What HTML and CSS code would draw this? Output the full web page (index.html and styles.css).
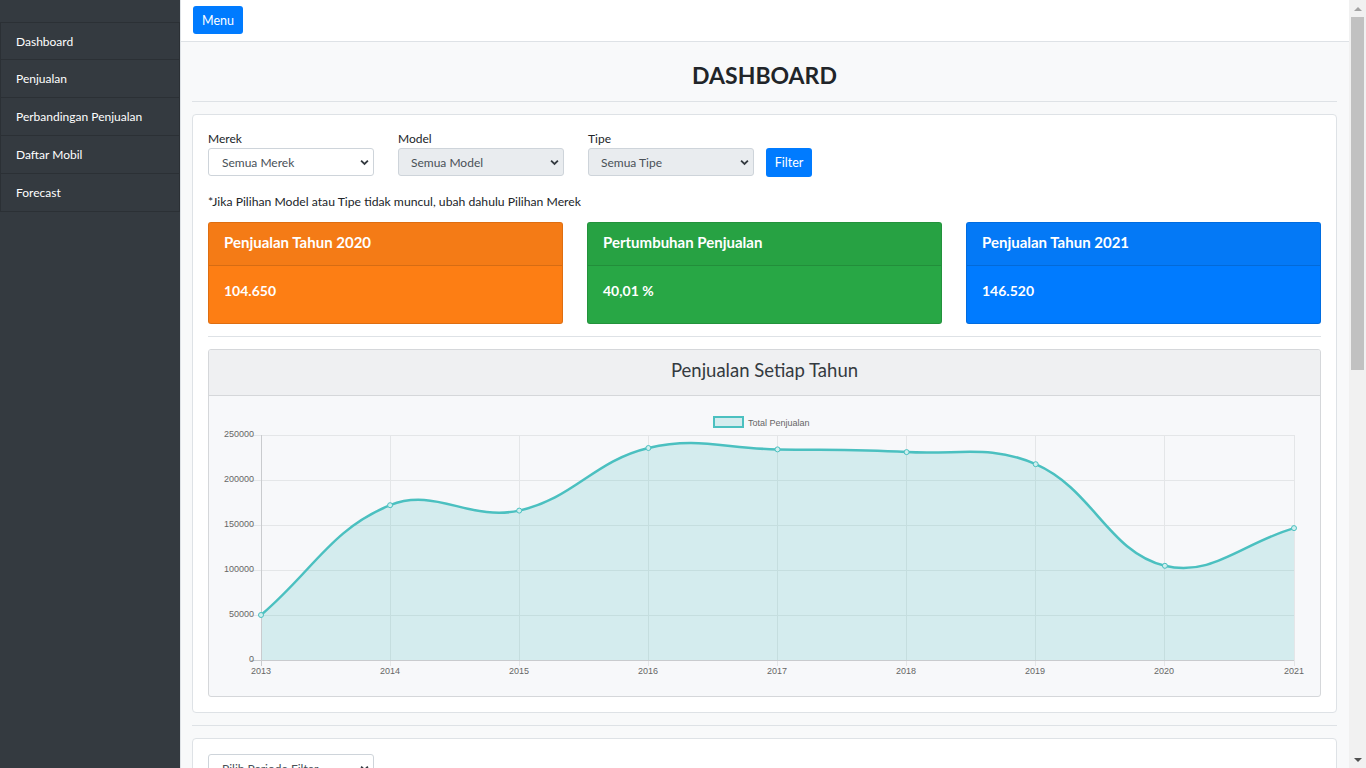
FILE: index.html
```html
<!DOCTYPE html>
<html lang="id">
<head>
<meta charset="utf-8">
<title>Dashboard</title>
<link rel="stylesheet" href="styles.css">
</head>
<body>
<div class="wrapper">
  <aside class="sidebar">
    <div class="sidebar-heading"></div>
    <nav class="side-list">
      <a class="side-item">Dashboard</a>
      <a class="side-item">Penjualan</a>
      <a class="side-item">Perbandingan Penjualan</a>
      <a class="side-item">Daftar Mobil</a>
      <a class="side-item">Forecast</a>
    </nav>
  </aside>
  <div class="page">
    <header class="topbar">
      <button class="btn btn-menu">Menu</button>
    </header>
    <main class="content">
      <h1 class="page-title">DASHBOARD</h1>
      <hr class="rule">
      <section class="card">
        <div class="filters">
          <div class="field">
            <label>Merek</label>
            <div class="select"><span>Semua Merek</span><svg class="chev" viewBox="0 0 10 7" width="9" height="7"><path d="M1.2 1.3 5 5.1l3.8-3.8" fill="none" stroke="#343a40" stroke-width="2"/></svg></div>
          </div>
          <div class="field">
            <label>Model</label>
            <div class="select disabled"><span>Semua Model</span><svg class="chev" viewBox="0 0 10 7" width="9" height="7"><path d="M1.2 1.3 5 5.1l3.8-3.8" fill="none" stroke="#343a40" stroke-width="2"/></svg></div>
          </div>
          <div class="field">
            <label>Tipe</label>
            <div class="select disabled"><span>Semua Tipe</span><svg class="chev" viewBox="0 0 10 7" width="9" height="7"><path d="M1.2 1.3 5 5.1l3.8-3.8" fill="none" stroke="#343a40" stroke-width="2"/></svg></div>
          </div>
          <button class="btn btn-filter">Filter</button>
        </div>
        <p class="note">*Jika Pilihan Model atau Tipe tidak muncul, ubah dahulu Pilihan Merek</p>
        <div class="stats">
          <div class="stat orange">
            <div class="stat-head">Penjualan Tahun 2020</div>
            <div class="stat-body">104.650</div>
          </div>
          <div class="stat green">
            <div class="stat-head">Pertumbuhan Penjualan</div>
            <div class="stat-body">40,01 %</div>
          </div>
          <div class="stat blue">
            <div class="stat-head">Penjualan Tahun 2021</div>
            <div class="stat-body">146.520</div>
          </div>
        </div>
        <hr class="rule inner">
        <div class="chart-card">
          <div class="chart-head">Penjualan Setiap Tahun</div>
          <div class="chart-body">
            <svg class="chart" width="1111" height="300" viewBox="209 396 1111 300">
              <g class="grid">
                <line x1="251" y1="435.5" x2="1294" y2="435.5"/>
                <line x1="251" y1="480.5" x2="1294" y2="480.5"/>
                <line x1="251" y1="525.5" x2="1294" y2="525.5"/>
                <line x1="251" y1="570.5" x2="1294" y2="570.5"/>
                <line x1="251" y1="615.5" x2="1294" y2="615.5"/>
                <line x1="390.5" y1="435" x2="390.5" y2="666"/>
                <line x1="519.5" y1="435" x2="519.5" y2="666"/>
                <line x1="648.5" y1="435" x2="648.5" y2="666"/>
                <line x1="777.5" y1="435" x2="777.5" y2="666"/>
                <line x1="906.5" y1="435" x2="906.5" y2="666"/>
                <line x1="1035.5" y1="435" x2="1035.5" y2="666"/>
                <line x1="1164.5" y1="435" x2="1164.5" y2="666"/>
                <line x1="1294.5" y1="435" x2="1294.5" y2="666"/>
              </g>
              <path class="area" d="M261,615 C312.6,571.1 331.5,528.8 390.1,505.2 C434.8,487.2 470.3,521.4 519.2,510.6 C573.6,498.6 594,460.9 648.4,448 C697.3,436.4 725.9,448.6 777.5,449.4 C829.1,450.2 855.1,449.1 906.6,452.1 C958.4,455.1 990.1,444.2 1035.7,464.2 C1093.5,489.7 1108.1,551.8 1164.9,565.8 C1211.4,577.3 1242.4,543.2 1294,528.1 L1294,660 L261,660 Z"/>
              <g class="axis">
                <line x1="261.5" y1="435" x2="261.5" y2="666"/>
                <line x1="251" y1="660.5" x2="1294" y2="660.5"/>
              </g>
              <path class="line" d="M261,615 C312.6,571.1 331.5,528.8 390.1,505.2 C434.8,487.2 470.3,521.4 519.2,510.6 C573.6,498.6 594,460.9 648.4,448 C697.3,436.4 725.9,448.6 777.5,449.4 C829.1,450.2 855.1,449.1 906.6,452.1 C958.4,455.1 990.1,444.2 1035.7,464.2 C1093.5,489.7 1108.1,551.8 1164.9,565.8 C1211.4,577.3 1242.4,543.2 1294,528.1"/>
              <g class="pts">
                <circle cx="261" cy="615" r="2.5"/>
                <circle cx="390.1" cy="505.2" r="2.5"/>
                <circle cx="519.2" cy="510.6" r="2.5"/>
                <circle cx="648.4" cy="448" r="2.5"/>
                <circle cx="777.5" cy="449.4" r="2.5"/>
                <circle cx="906.6" cy="452.1" r="2.5"/>
                <circle cx="1035.7" cy="464.2" r="2.5"/>
                <circle cx="1164.9" cy="565.8" r="2.5"/>
                <circle cx="1294" cy="528.1" r="2.5"/>
              </g>
              <g class="ylab">
                <text x="254" y="437">250000</text>
                <text x="254" y="482">200000</text>
                <text x="254" y="527">150000</text>
                <text x="254" y="572">100000</text>
                <text x="254" y="617">50000</text>
                <text x="254" y="662">0</text>
              </g>
              <g class="xlab">
                <text x="261" y="674">2013</text>
                <text x="390" y="674">2014</text>
                <text x="519" y="674">2015</text>
                <text x="648" y="674">2016</text>
                <text x="777" y="674">2017</text>
                <text x="906" y="674">2018</text>
                <text x="1035" y="674">2019</text>
                <text x="1164" y="674">2020</text>
                <text x="1294" y="674">2021</text>
              </g>
              <rect class="legend-box" x="714" y="417" width="29" height="10"/>
              <text class="legend-text" x="748" y="425.5">Total Penjualan</text>
            </svg>
          </div>
        </div>
      </section>
      <hr class="rule">
      <section class="card card-second">
        <div class="select period"><span>Pilih Periode Filter</span><svg class="chev" viewBox="0 0 10 7" width="9" height="7"><path d="M1.2 1.3 5 5.1l3.8-3.8" fill="none" stroke="#343a40" stroke-width="2"/></svg></div>
      </section>
    </main>
  </div>
</div>
<div class="scrollbar" aria-hidden="true">
  <div class="sb-arrow up"></div>
  <div class="sb-track"><div class="sb-thumb"></div></div>
  <div class="sb-arrow down"></div>
</div>
</body>
</html>
```

FILE: styles.css
```css
* { box-sizing: border-box; }
html, body { margin: 0; padding: 0; }
body {
  font-family: Lato, "Noto Sans", sans-serif;
  font-size: 12px;
  color: #212529;
  background: #f8f9fa;
  margin-right: 17px;
}
.wrapper { display: flex; min-height: 100vh; }
.sidebar {
  width: 181px;
  flex: 0 0 181px;
  background: #343a40;
  border-right: 1px solid #dee2e6;
}
.sidebar-heading { height: 22px; }
.side-list { display: flex; flex-direction: column; }
.side-item {
  display: flex;
  align-items: center;
  height: 39px;
  padding-left: 15px;
  color: #fff;
  border: 1px solid #2b3035;
  margin-top: -1px;
  font-size: 12px;
}
.side-item:first-child { margin-top: 0; height: 38px; }
.page { flex: 1; min-width: 0; display: flex; flex-direction: column; }
.topbar {
  height: 42px;
  background: #fff;
  border-bottom: 1px solid #dee2e6;
  padding: 6px 12px;
}
.btn {
  border: 0;
  border-radius: 3px;
  background: #007bff;
  color: #fff;
  font-family: inherit;
  font-size: 12.5px;
  cursor: pointer;
}
.btn-menu { width: 50px; height: 28px; padding: 0; }
.content { padding: 0 12px 24px 11px; }
.page-title {
  margin: 0;
  height: 59px;
  padding-top: 18px;
  text-align: center;
  font-size: 23px;
  font-weight: 700;
  line-height: 30px;
  color: #212529;
}
.rule {
  border: 0;
  border-top: 1px solid #dee2e6;
  margin: 0 0 12px;
}
.rule.inner { margin: 12px 0 12px; }
.card {
  background: #fff;
  border: 1px solid #dee2e6;
  border-radius: 4px;
  padding: 15px;
  margin-bottom: 12px;
}
.filters { display: flex; align-items: flex-end; gap: 24px; }
.field { display: flex; flex-direction: column; width: 166px; }
.field label { line-height: 18px; font-size: 12px; }
.select {
  height: 28px;
  border: 1px solid #ced4da;
  border-radius: 3px;
  background: #fff;
  color: #495057;
  display: flex;
  align-items: center;
  justify-content: space-between;
  padding: 0 4px 0 13px;
  font-size: 12px;
}
.select.disabled { background: #e9ecef; padding-left: 12px; }
.chev { width: 9px; height: 7px; }
.btn-filter { width: 46px; height: 29px; margin-left: -12px; margin-bottom: -1px; padding: 0; }
.note { margin: 17px 0 11px; line-height: 18px; font-size: 12.2px; }
.stats { display: flex; gap: 24px; }
.stat {
  flex: 1;
  height: 102px;
  border-radius: 3px;
  border: 1px solid rgba(0,0,0,.12);
  color: #fff;
  font-weight: 700;
  font-size: 15px;
  overflow: hidden;
}
.stat-head {
  height: 43px;
  padding: 10px 15px 0;
  line-height: 18px;
  border-bottom: 1px solid rgba(0,0,0,.12);
}
.stat-body { padding: 16px 15px 0; line-height: 18px; font-size: 14px; }
.orange { background: #fd7e14; }
.orange .stat-head { background: #f47b16; }
.green { background: #28a745; }
.green .stat-head { background: #27a243; }
.blue { background: #007bff; }
.blue .stat-head { background: #0479f6; }
.chart-card {
  border: 1px solid #d5d7da;
  border-radius: 3px;
  overflow: hidden;
  background: #f7f8fa;
}
.chart-head {
  height: 46px;
  padding-top: 8px;
  background: #eff0f2;
  border-bottom: 1px solid #d5d7da;
  text-align: center;
  line-height: 24px;
  font-size: 18.5px;
  color: #343a40;
}
.chart-body { height: 300px; }
.chart { display: block; }
.grid line { stroke: #e4e6e8; stroke-width: 1; }
.axis line { stroke: #c9cbce; stroke-width: 1; }
.area { fill: rgba(75,192,192,0.2); }
.line { fill: none; stroke: #4bc0c0; stroke-width: 2.5; }
.pts circle { fill: #cfeeee; stroke: #4bc0c0; stroke-width: 1; }
.ylab text, .xlab text, .legend-text {
  font-family: "Liberation Sans", Arial, sans-serif;
  font-size: 9px;
  fill: #666;
}
.ylab text { text-anchor: end; }
.xlab text { text-anchor: middle; }
.legend-box { fill: rgba(75,192,192,0.2); stroke: #4bc0c0; stroke-width: 2; }
.card-second { min-height: 860px; }
.period { width: 166px; }
.scrollbar {
  position: fixed;
  top: 0;
  right: 0;
  width: 17px;
  height: 100vh;
  background: #f1f1f1;
  display: flex;
  flex-direction: column;
}
.sb-arrow { height: 17px; display: flex; align-items: center; justify-content: center; }
.sb-arrow::before {
  content: "";
  border-left: 4px solid transparent;
  border-right: 4px solid transparent;
}
.sb-arrow.up::before { border-bottom: 4px solid #a3a3a3; }
.sb-arrow.down::before { border-top: 4px solid #505050; }
.sb-track { flex: 1; padding: 0 2px; }
.sb-thumb { height: 353px; background: #c1c1c1; }
```
